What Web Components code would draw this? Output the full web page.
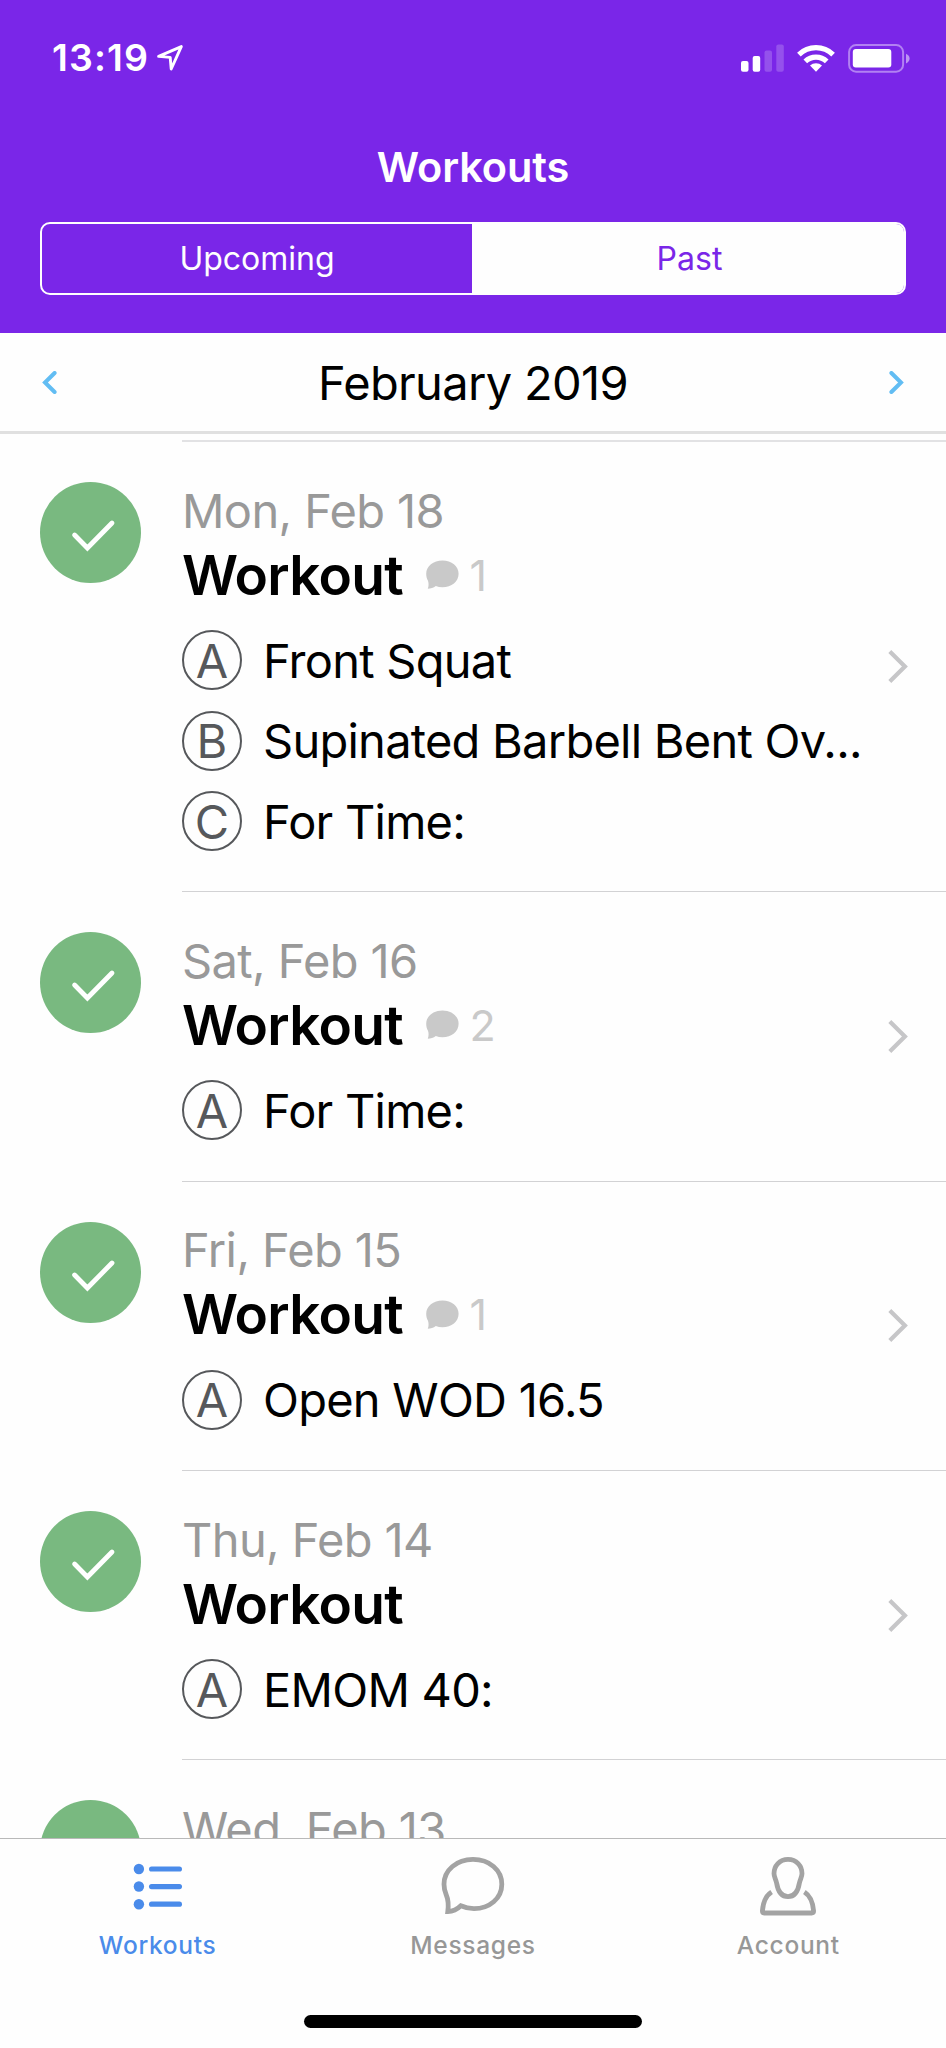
<!DOCTYPE html>
<html lang="en">
<head>
<meta charset="utf-8">
<title>Workouts</title>
<style>
  html, body {
    margin: 0;
    padding: 0;
  }
  body {
    width: 946px;
    height: 2048px;
    overflow: hidden;
    background: #fefefe;
    font-family: Inter, "Liberation Sans", sans-serif;
    color: #000;
  }
</style>
</head>
<body>
<workouts-app></workouts-app>

<script>
class StatusBar extends HTMLElement {
  constructor() {
    super();
    this.attachShadow({ mode: "open" });
  }

  connectedCallback() {
    this.shadowRoot.innerHTML = `
      <style>
        :host {
          display: flex;
          align-items: center;
          height: 116px;
          padding: 0 36px 0 52px;
          box-sizing: border-box;
          color: #fff;
        }
        .time {
          font-size: 37.5px;
          font-weight: 600;
          line-height: 44px;
          letter-spacing: 1.1px;
          flex: 1;
          display: flex;
          align-items: center;
          gap: 8px;
        }
        svg { display: block; }
        .icons { display: flex; align-items: center; gap: 13px; }
      </style>
      <div class="time">
        <span>${this.getAttribute("time")}</span>
        <svg width="26" height="26" viewBox="0 0 26 26" fill="none" stroke="#fff" stroke-width="2.9" stroke-linejoin="round">
          <path d="M1.6 11.4 L24.3 1.6 L14.2 24 L13.2 12.4 Z"/>
        </svg>
      </div>
      <div class="icons">
        <svg width="43" height="28" viewBox="0 0 43 28" fill="#fff">
          <rect x="0" y="17" width="7.5" height="10.8" rx="2"/>
          <rect x="11.7" y="12" width="7.5" height="15.8" rx="2"/>
          <rect x="23.5" y="6.5" width="7.5" height="21.3" rx="2" opacity="0.2"/>
          <rect x="35.3" y="0.5" width="7.5" height="27.3" rx="2" opacity="0.2"/>
        </svg>
        <svg width="38" height="28" viewBox="0 0 38 28" fill="none" stroke="#fff" stroke-width="5.2">
          <path d="M1.9 10.6 A24.6 24.6 0 0 1 36.1 10.6"/>
          <path d="M8.3 17.4 A15.3 15.3 0 0 1 29.7 17.4"/>
          <path d="M13 21.6 A8.6 8.6 0 0 1 25 21.6 L19 27.8 Z" fill="#fff" stroke="none"/>
        </svg>
        <svg width="62" height="29" viewBox="0 0 62 29">
          <rect x="1.1" y="1.1" width="54" height="26.6" rx="7" fill="none" stroke="#fff" stroke-width="2" opacity="0.42"/>
          <rect x="4.8" y="5" width="38.5" height="18.6" rx="3" fill="#fff"/>
          <path d="M58 9.8 Q61.6 11.4 61.6 14.6 Q61.6 17.8 58 19.4 Z" fill="#fff" opacity="0.5"/>
        </svg>
      </div>
    `;
  }
}

class SegmentedControl extends HTMLElement {
  constructor() {
    super();
    this.attachShadow({ mode: "open" });
  }

  connectedCallback() {
    this.shadowRoot.innerHTML = `
      <style>
        :host {
          display: grid;
          grid-template-columns: 430px 1fr;
          height: 73px;
          margin: 0 40px;
          box-sizing: border-box;
          border: 2.5px solid #fefefe;
          border-radius: 10px;
          overflow: hidden;
          font-size: 32px;
        }
        ::slotted(*) {
          display: flex;
          align-items: center;
          justify-content: center;
          color: #fefefe;
        }
        ::slotted([selected]) {
          padding-left: 3px;
          background: #fefefe;
          color: #7a26e8;
        }
      </style>
      <slot></slot>
    `;
  }
}

class MonthPicker extends HTMLElement {
  constructor() {
    super();
    this.attachShadow({ mode: "open" });
  }

  connectedCallback() {
    this.shadowRoot.innerHTML = `
      <style>
        :host {
          display: flex;
          align-items: center;
          justify-content: space-between;
          height: 101px;
          padding: 0 42px 0 42px;
          box-sizing: border-box;
          border-bottom: 3px solid #e0e0e0;
          font-size: 47px;
          letter-spacing: -0.65px;
        }
        svg { display: block; }
        ::slotted(*) { padding-top: 1px; }
      </style>
      <svg width="15" height="23" viewBox="0 0 15 23" fill="none" stroke="#62bdf3" stroke-width="4" stroke-linecap="round"><path d="M12.6 2 L3 11.5 L12.6 21"/></svg>
      <slot></slot>
      <svg width="15" height="23" viewBox="0 0 15 23" fill="none" stroke="#62bdf3" stroke-width="4" stroke-linecap="round"><path d="M2.4 2 L12 11.5 L2.4 21"/></svg>
    `;
  }
}

class WorkoutRow extends HTMLElement {
  constructor() {
    super();
    this.attachShadow({ mode: "open" });
  }

  connectedCallback() {
    const name = this.getAttribute("name") || "";
    const comments = this.getAttribute("comments");
    this.shadowRoot.innerHTML = `
      <style>
        :host {
          display: flex;
          flex-shrink: 0;
        }
        .done {
          width: 101px;
          height: 101px;
          margin: 40px 41px 0 40px;
          flex-shrink: 0;
        }
        .content {
          flex: 1;
          min-width: 0;
          display: flex;
          align-items: center;
          box-sizing: border-box;
          padding-right: 38px;
          border-bottom: 1px solid #d2d2d4;
        }
        .details {
          flex: 1;
          min-width: 0;
          padding: 44.5px 0 30.1px;
        }
        .date {
          font-size: 47px;
          line-height: 48px;
          color: #999;
          letter-spacing: -0.6px;
        }
        .title {
          display: flex;
          align-items: center;
          height: 80px;
          font-size: 55px;
          font-weight: 600;
          letter-spacing: -0.75px;
        }
        .comments {
          display: flex;
          align-items: center;
          gap: 10.5px;
          margin-left: 23px;
          font-size: 43px;
          font-weight: 400;
          letter-spacing: 0;
          color: #c9c9c9;
        }
        .exercises { padding-top: 5.25px; }
        svg { display: block; flex-shrink: 0; }
      </style>
      <svg class="done" viewBox="0 0 101 101">
        <circle cx="50.5" cy="50.5" r="50.5" fill="#79b980"/>
        <path d="M34.6 53 L47.4 66 L72 41" fill="none" stroke="#fff" stroke-width="4.8" stroke-linecap="round"/>
      </svg>
      <div class="content">
        <div class="details">
          <div class="date">${this.getAttribute("date")}</div>
          <div class="title">
            <span>${name}</span>
            ${comments ? `
              <span class="comments">
                <svg width="33" height="29" viewBox="0 0 33 29" fill="#c9c9c9">
                  <path d="M16.5 0.4 C25.6 0.4 32.6 6 32.6 13.8 C32.6 21.6 25.6 27.2 16.5 27.2 C14 27.2 11.8 26.8 9.8 26 C7.6 27.8 4.6 28.6 1.8 28.8 C2.8 26 2.8 23.4 2 20.8 C0.8 18.8 0.2 16.4 0.2 13.8 C0.2 6 7.4 0.4 16.5 0.4 Z"/>
                </svg>
                <span>${comments}</span>
              </span>` : ""}
          </div>
          <div class="exercises"><slot></slot></div>
        </div>
        <svg width="20" height="33" viewBox="0 0 20 33" fill="none" stroke="#c6c6c8" stroke-width="4.2"><path d="M1.8 1.6 L16.9 16.5 L1.8 31.4"/></svg>
      </div>
    `;
  }
}

class WorkoutExercise extends HTMLElement {
  constructor() {
    super();
    this.attachShadow({ mode: "open" });
  }

  connectedCallback() {
    this.shadowRoot.innerHTML = `
      <style>
        :host {
          display: flex;
          align-items: center;
          gap: 21px;
          height: 80.5px;
          font-size: 47px;
          letter-spacing: -0.75px;
          white-space: nowrap;
        }
        .letter {
          display: flex;
          align-items: center;
          justify-content: center;
          width: 60px;
          height: 60px;
          flex-shrink: 0;
          box-sizing: border-box;
          border: 2px solid #56585b;
          border-radius: 50%;
          color: #56585b;
          letter-spacing: 0;
        }
      </style>
      <span class="letter">${this.getAttribute("letter")}</span>
      <slot></slot>
    `;
  }
}

class TabItem extends HTMLElement {
  constructor() {
    super();
    this.attachShadow({ mode: "open" });
  }

  connectedCallback() {
    const icons = {
      list: `
        <g fill="currentColor" stroke="none">
          <circle cx="12.9" cy="13" r="5.2"/>
          <circle cx="12.9" cy="30.5" r="5.2"/>
          <circle cx="12.9" cy="48.2" r="5.2"/>
          <rect x="23" y="10.4" width="33" height="5.2" rx="2.6"/>
          <rect x="23" y="28" width="33" height="5.2" rx="2.6"/>
          <rect x="23" y="45.6" width="33" height="5.2" rx="2.6"/>
        </g>`,
      message: `
        <path d="M32 3.4 C48.4 3.4 60.8 14 60.8 28.2 C60.8 42.4 48.4 52.6 33 52.6 C28.2 52.6 23.8 51.6 19.8 49.8 C16.6 53 13 55.4 6.8 55.6 C7.6 49.4 7.2 43.4 5.2 38.8 C3.8 35.4 3 32.4 3 28.2 C3 14 15.8 3.4 32 3.4 Z"/>`,
      account: `
        <path d="M32 3.4 C40.4 3.4 46 9.8 46 17.6 C46 21 44.2 23.2 43.4 27 C42.2 34.4 39 40.6 32 40.6 C25 40.6 21.8 34.4 20.6 27 C19.8 23.2 18 21 18 17.6 C18 9.8 23.6 3.4 32 3.4 Z"/>
        <path d="M15.6 36 C8.6 40.4 7 47.6 6.4 55 Q6.4 57 8.4 57 L55.6 57 Q57.6 57 57.6 55 C57 47.6 55.4 40.4 48.4 36"/>`
    };
    this.shadowRoot.innerHTML = `
      <style>
        :host {
          display: flex;
          flex-direction: column;
          align-items: center;
          color: #979797;
          font-size: 24.5px;
          font-weight: 500;
          letter-spacing: 0.7px;
          line-height: 30px;
        }
        :host([active]) { color: #4a8bea; }
        svg { display: block; margin: 17px 0 14px; }
      </style>
      <svg width="64" height="60" viewBox="0 0 64 60" fill="none" stroke="${this.hasAttribute("active") ? "currentColor" : "#a3a3a3"}" stroke-width="4.8">${icons[this.getAttribute("icon")]}</svg>
      <slot></slot>
    `;
  }
}

class TabBar extends HTMLElement {
  constructor() {
    super();
    this.attachShadow({ mode: "open" });
  }

  connectedCallback() {
    this.shadowRoot.innerHTML = `
      <style>
        :host {
          display: flex;
          flex-direction: column;
          height: 210px;
          flex-shrink: 0;
          box-sizing: border-box;
          border-top: 1px solid #b9b9b9;
          background: #fefefe;
        }
        .tabs {
          flex: 1;
          display: grid;
          grid-template-columns: repeat(3, 1fr);
        }
        .home-indicator {
          width: 338px;
          height: 13px;
          margin: 0 auto 20px;
          border-radius: 7px;
          background: #000;
        }
      </style>
      <div class="tabs"><slot></slot></div>
      <div class="home-indicator"></div>
    `;
  }
}

class WorkoutsApp extends HTMLElement {
  constructor() {
    super();
    this.attachShadow({ mode: "open" });
  }

  connectedCallback() {
    this.shadowRoot.innerHTML = `
      <style>
        :host {
          display: flex;
          flex-direction: column;
          height: 2048px;
        }
        header {
          height: 333px;
          flex-shrink: 0;
          background: #7a26e8;
        }
        h1 {
          margin: 0;
          height: 106px;
          line-height: 102px;
          font-size: 41.5px;
          font-weight: 600;
          text-align: center;
          color: #fff;
          letter-spacing: -0.1px;
        }
        main {
          flex: 1;
          min-height: 0;
          overflow: hidden;
          display: flex;
          flex-direction: column;
        }
        .separator {
          flex-shrink: 0;
          height: 2px;
          margin: 6px 0 0 182px;
          background: #e2e2e4;
        }
      </style>
      <header>
        <status-bar time="13:19"></status-bar>
        <h1>Workouts</h1>
        <segmented-control>
          <span>Upcoming</span>
          <span selected>Past</span>
        </segmented-control>
      </header>
      <month-picker><span>February 2019</span></month-picker>
      <main>
        <div class="separator"></div>
        <workout-row date="Mon, Feb 18" name="Workout" comments="1">
          <workout-exercise letter="A">Front Squat</workout-exercise>
          <workout-exercise letter="B">Supinated Barbell Bent Ov...</workout-exercise>
          <workout-exercise letter="C">For Time:</workout-exercise>
        </workout-row>
        <workout-row date="Sat, Feb 16" name="Workout" comments="2">
          <workout-exercise letter="A">For Time:</workout-exercise>
        </workout-row>
        <workout-row date="Fri, Feb 15" name="Workout" comments="1">
          <workout-exercise letter="A">Open WOD 16.5</workout-exercise>
        </workout-row>
        <workout-row date="Thu, Feb 14" name="Workout">
          <workout-exercise letter="A">EMOM 40:</workout-exercise>
        </workout-row>
        <workout-row date="Wed, Feb 13"></workout-row>
      </main>
      <tab-bar>
        <tab-item icon="list" active>Workouts</tab-item>
        <tab-item icon="message">Messages</tab-item>
        <tab-item icon="account">Account</tab-item>
      </tab-bar>
    `;
  }
}

customElements.define("status-bar", StatusBar);
customElements.define("segmented-control", SegmentedControl);
customElements.define("month-picker", MonthPicker);
customElements.define("workout-exercise", WorkoutExercise);
customElements.define("workout-row", WorkoutRow);
customElements.define("tab-item", TabItem);
customElements.define("tab-bar", TabBar);
customElements.define("workouts-app", WorkoutsApp);
</script>
</body>
</html>
